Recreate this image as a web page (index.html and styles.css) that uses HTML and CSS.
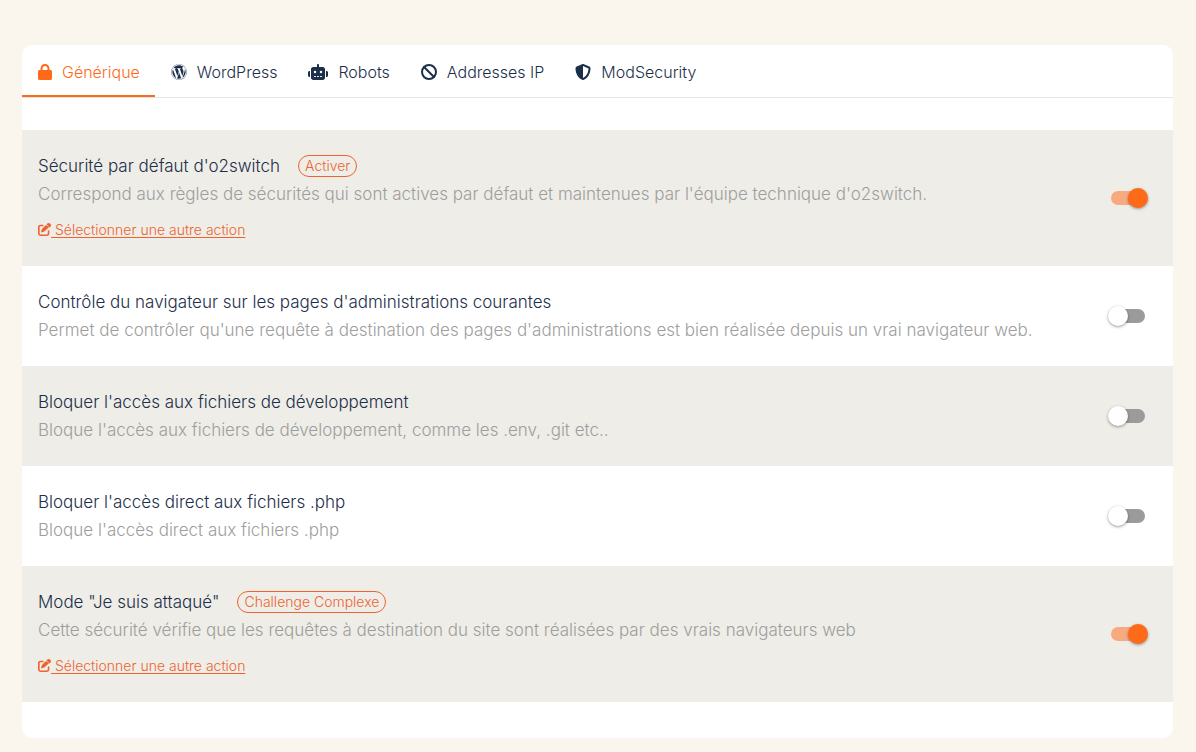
FILE: index.html
```html
<!DOCTYPE html>
<html lang="fr">
<head>
<meta charset="utf-8">
<meta name="viewport" content="width=device-width, initial-scale=1">
<title>Sécurité</title>
<link rel="stylesheet" href="styles.css">
</head>
<body>
<main class="card">
  <nav class="tabs" role="tablist">
    <button class="tab tab-active" type="button" role="tab" aria-selected="true">
      <svg class="icon" viewBox="0 0 448 512" aria-hidden="true"><path d="M144 144v48h160v-48c0-44-36-80-80-80s-80 36-80 80zM80 192v-48C80 64 144 0 224 0s144 64 144 144v48h32c26 0 48 22 48 48v224c0 26-22 48-48 48H48c-26 0-48-22-48-48V240c0-26 22-48 48-48z"/></svg>
      <span>Générique</span>
    </button>
    <button class="tab" type="button" role="tab" aria-selected="false">
      <svg class="icon" viewBox="0 0 512 512" aria-hidden="true"><path d="M61.700 169.400l101.500 278C92.200 413 43.300 340.200 43.300 256c0-30.900 6.600-60.100 18.400-86.600zm337.900 75.900c0-26.300-9.400-44.500-17.500-58.700-10.800-17.500-20.900-32.400-20.900-49.900 0-19.600 14.800-37.800 35.700-37.800.9 0 1.800.1 2.800.2-37.900-34.700-88.300-55.900-143.700-55.900-74.300 0-139.700 38.100-177.800 95.900 5 .2 9.700.3 13.700.3 22.200 0 56.700-2.700 56.700-2.700 11.500-.7 12.800 16.200 1.400 17.500 0 0-11.500 1.300-24.300 2l77.500 230.400L249.800 247l-33.100-90.800c-11.500-.7-22.300-2-22.300-2-11.500-.7-10.100-18.200 1.300-17.500 0 0 35.100 2.700 56 2.700 22.200 0 56.700-2.700 56.700-2.700 11.500-.7 12.800 16.200 1.400 17.500 0 0-11.500 1.300-24.300 2l76.900 228.700 21.200-70.900c9-29.400 16-50.500 16-68.700zm-139.900 29.300l-63.800 185.500c19.100 5.600 39.200 8.700 60.100 8.700 24.800 0 48.500-4.300 70.600-12.100-.6-.9-1.100-1.900-1.500-2.900l-65.400-179.200zm183-120.700c.9 6.800 1.400 14 1.400 21.900 0 21.600-4 45.800-16.200 76.200l-65 187.900C426.200 403 468.700 334.500 468.700 256c0-37-9.400-71.800-26-102.100zM504 256c0 136.800-111.300 248-248 248C119.200 504 8 392.700 8 256 8 119.200 119.200 8 256 8c136.700 0 248 111.200 248 248zm-11.400 0c0-130.500-106.200-236.600-236.600-236.600C125.500 19.400 19.400 125.500 19.400 256S125.600 492.600 256 492.600c130.500 0 236.600-106.100 236.600-236.600z"/></svg>
      <span>WordPress</span>
    </button>
    <button class="tab" type="button" role="tab" aria-selected="false">
      <svg class="icon" viewBox="0 0 640 512" aria-hidden="true"><path fill-rule="evenodd" d="M320 0c18 0 32 14 32 32v64h120c40 0 72 32 72 72v272c0 40-32 72-72 72H168c-40 0-72-32-72-72V168c0-40 32-72 72-72h120V32c0-18 14-32 32-32zM208 384a16 16 0 0 0 0 32h32a16 16 0 0 0 0-32zM304 384a16 16 0 0 0 0 32h32a16 16 0 0 0 0-32zM400 384a16 16 0 0 0 0 32h32a16 16 0 0 0 0-32zM264 256a40 40 0 1 0-80 0 40 40 0 0 0 80 0zM456 256a40 40 0 1 0-80 0 40 40 0 0 0 80 0zM48 224h16v192H48c-26 0-48-22-48-48v-96c0-26 22-48 48-48zM592 224c26 0 48 22 48 48v96c0 26-22 48-48 48h-16V224z"/></svg>
      <span>Robots</span>
    </button>
    <button class="tab" type="button" role="tab" aria-selected="false">
      <svg class="icon" viewBox="0 0 512 512" aria-hidden="true"><circle class="stroke" cx="256" cy="256" r="224"/><path class="stroke" d="M98 98l316 316"/></svg>
      <span>Addresses IP</span>
    </button>
    <button class="tab" type="button" role="tab" aria-selected="false">
      <svg class="icon" viewBox="0 0 512 512" aria-hidden="true"><path fill-rule="evenodd" d="M256 0c5 0 9 1 13 3l188 80c22 9 39 31 39 57-1 99-41 281-213 363-17 8-37 8-54 0C57 421 17 239 16 140c0-26 17-48 39-57L243 3c4-2 8-3 13-3zm0 67v378c138-67 175-215 176-303z"/></svg>
      <span>ModSecurity</span>
    </button>
  </nav>

  <ul class="rules">
    <li class="rule">
      <div class="rule-body">
        <div class="rule-head"><label class="rule-title" for="rule-default">Sécurité par défaut d'o2switch</label><span class="badge">Activer</span></div>
        <p class="rule-text">Correspond aux règles de sécurités qui sont actives par défaut et maintenues par l'équipe technique d'o2switch.</p>
        <a class="rule-link" href="#action-default"><svg class="icon-edit" viewBox="0 0 512 512" aria-hidden="true"><path d="M472 22c-29-29-76-29-105 0l-31 30 124 124 30-31c29-29 29-76 0-105zM314 75L173 216c-9 9-16 20-20 32l-30 89c-3 9-1 18 6 25s16 9 25 6l89-30c12-4 23-11 32-20l163-163z"/><path class="stroke" d="M192 96H96c-35 0-64 29-64 64v256c0 35 29 64 64 64h256c35 0 64-29 64-64v-96"/></svg> Sélectionner une autre action</a>
      </div>
      <input class="switch" id="rule-default" type="checkbox" role="switch" checked>
    </li>
    <li class="rule">
      <div class="rule-body">
        <div class="rule-head"><label class="rule-title" for="rule-browser">Contrôle du navigateur sur les pages d'administrations courantes</label></div>
        <p class="rule-text">Permet de contrôler qu'une requête à destination des pages d'administrations est bien réalisée depuis un vrai navigateur web.</p>
      </div>
      <input class="switch" id="rule-browser" type="checkbox" role="switch">
    </li>
    <li class="rule">
      <div class="rule-body">
        <div class="rule-head"><label class="rule-title" for="rule-dev">Bloquer l'accès aux fichiers de développement</label></div>
        <p class="rule-text">Bloque l'accès aux fichiers de développement, comme les .env, .git etc..</p>
      </div>
      <input class="switch" id="rule-dev" type="checkbox" role="switch">
    </li>
    <li class="rule">
      <div class="rule-body">
        <div class="rule-head"><label class="rule-title" for="rule-php">Bloquer l'accès direct aux fichiers .php</label></div>
        <p class="rule-text">Bloque l'accès direct aux fichiers .php</p>
      </div>
      <input class="switch" id="rule-php" type="checkbox" role="switch">
    </li>
    <li class="rule">
      <div class="rule-body">
        <div class="rule-head"><label class="rule-title" for="rule-attack">Mode "Je suis attaqué"</label><span class="badge">Challenge Complexe</span></div>
        <p class="rule-text">Cette sécurité vérifie que les requêtes à destination du site sont réalisées par des vrais navigateurs web</p>
        <a class="rule-link" href="#action-attack"><svg class="icon-edit" viewBox="0 0 512 512" aria-hidden="true"><path d="M472 22c-29-29-76-29-105 0l-31 30 124 124 30-31c29-29 29-76 0-105zM314 75L173 216c-9 9-16 20-20 32l-30 89c-3 9-1 18 6 25s16 9 25 6l89-30c12-4 23-11 32-20l163-163z"/><path class="stroke" d="M192 96H96c-35 0-64 29-64 64v256c0 35 29 64 64 64h256c35 0 64-29 64-64v-96"/></svg> Sélectionner une autre action</a>
      </div>
      <input class="switch" id="rule-attack" type="checkbox" role="switch" checked>
    </li>
  </ul>
</main>
</body>
</html>
```
FILE: styles.css
```css
* {
  box-sizing: border-box;
}

body {
  margin: 0;
  padding: 45px 23px 14px 22px;
  background: #faf6ee;
  color: #1c2f4a;
  font-family: Inter, "Open Sans", sans-serif;
  font-size: 17px;
  font-weight: 300;
  line-height: 28px;
}

.card {
  padding-bottom: 36px;
  background: #fff;
  border-radius: 10px;
}

.tabs {
  display: flex;
  border-bottom: 1px solid #e4e4e4;
}

.tab {
  display: flex;
  align-items: center;
  gap: 10px;
  padding: 13px 15px 9px 16px;
  border: 0;
  border-bottom: 2px solid transparent;
  background: none;
  color: inherit;
  font: inherit;
  font-size: 16px;
  cursor: pointer;
}

.tab-active {
  border-bottom-color: #ff6a18;
  color: #ff6a18;
}

.icon {
  height: 16px;
  fill: currentColor;
}

.stroke {
  fill: none;
  stroke: currentColor;
  stroke-width: 64px;
  stroke-linecap: round;
}

.rules {
  margin: 32px 0 0;
  padding: 0;
  list-style: none;
}

.rule {
  display: flex;
  align-items: center;
  justify-content: space-between;
  gap: 16px;
  padding: 22px 28px 22px 16px;
}

.rule:nth-child(odd) {
  background: #eeede7;
}

.rule-head {
  display: flex;
  align-items: center;
  gap: 18px;
}

.rule-text {
  margin: 0;
  color: #9e9e9e;
}

.badge {
  padding: 0 6px;
  border: 1px solid #ee6430;
  border-radius: 11px;
  color: #ee6430;
  font-size: 14px;
  line-height: 20px;
}

.rule-link {
  display: block;
  width: fit-content;
  margin-top: 8px;
  color: #ee6430;
  font-size: 14px;
  text-underline-offset: 2px;
}

.icon-edit {
  width: 13px;
  height: 13px;
  vertical-align: -1px;
  fill: currentColor;
}

.switch {
  position: relative;
  flex: none;
  width: 34px;
  height: 14px;
  margin: 0;
  appearance: none;
  border-radius: 7px;
  background: #9b9b9b;
  cursor: pointer;
}

.switch::before {
  content: "";
  position: absolute;
  top: -3px;
  left: -3px;
  width: 20px;
  height: 20px;
  border-radius: 50%;
  background: #fff;
  box-shadow: 0 1px 3px rgba(0, 0, 0, 0.4);
}

.switch:checked {
  background: #f7aa80;
}

.switch:checked::before {
  left: 17px;
  background: #ff6a18;
}
```
